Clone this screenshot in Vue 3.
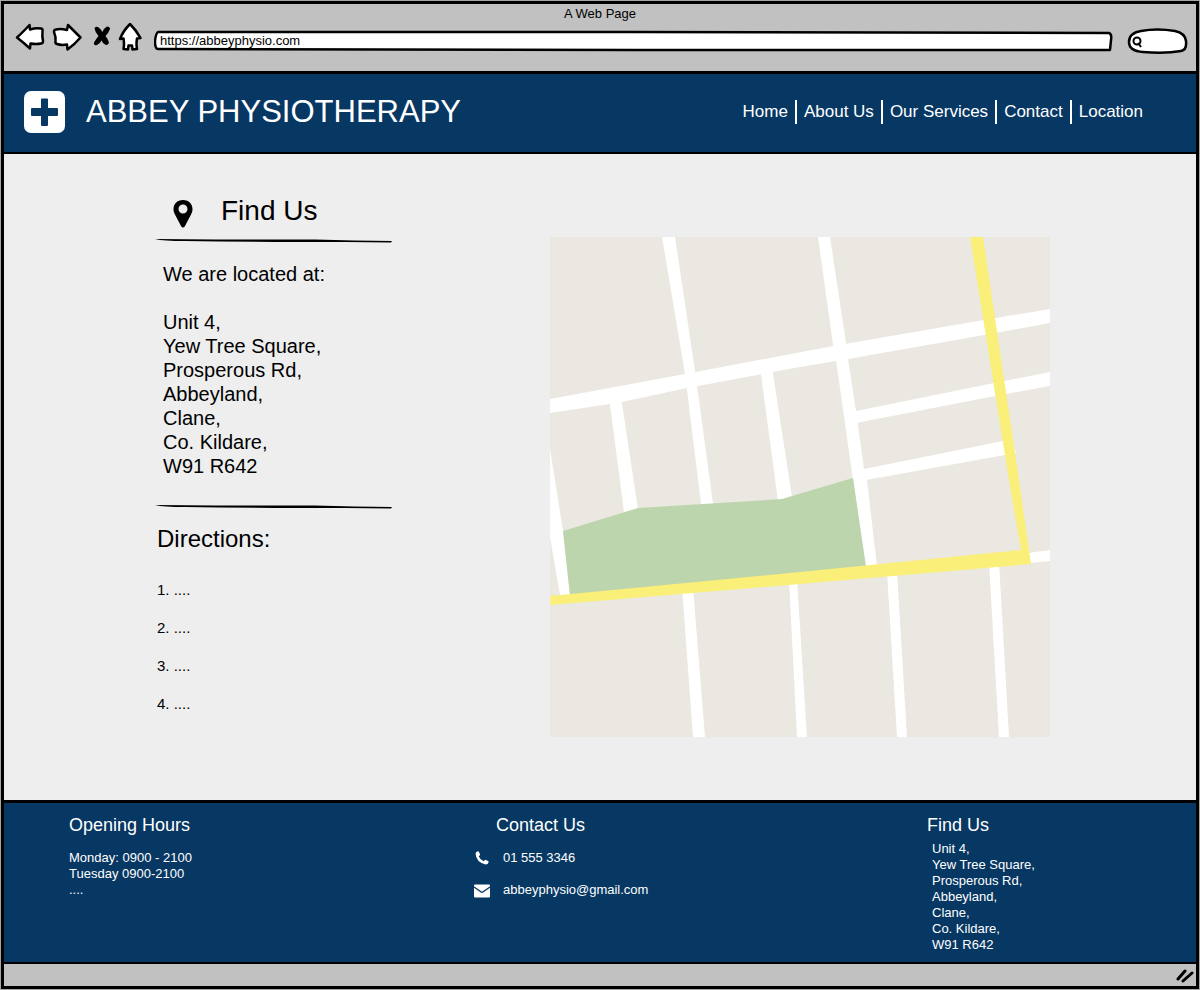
<script setup>
import { ref } from 'vue'

const address = ref('https://abbeyphysio.com')
const query = ref('')

const navItems = ['Home', 'About Us', 'Our Services', 'Contact', 'Location']
const addressLines = [
  'Unit 4,',
  'Yew Tree Square,',
  'Prosperous Rd,',
  'Abbeyland,',
  'Clane,',
  'Co. Kildare,',
  'W91 R642'
]
const directions = ['1. ....', '2. ....', '3. ....', '4. ....']
const hours = ['Monday: 0900 - 2100', 'Tuesday 0900-2100', '....']

const roads = [
  '0,162 135,137 283,109 434,83 500,72 500,86 434,98 298,122 250,130 137,151 72,165 60,167 0,176',
  '112,0 125,0 145,134 147,148 163,267 151,267 137,153 135,137',
  '59,160 71,160 88,272 74,275',
  '210,130 222,130 242,260 228,264',
  '0,212 5,243 13,294 20,357 20,362 11,362 10,358 0,300',
  '268,0 280,0 296,106 298,122 306,174 314,232 317,243 327,330 316,330 303,243 286,123 283,108',
  '306,174 444,146 500,135 500,149 445,159 306,186',
  '314,232 453,204 461,202 466,216 455,218 316,243',
  '478,316 500,313 500,324 480,326',
  '132,350 143,350 155,500 143,500',
  '239,342 247,342 257,500 247,500',
  '337,335 347,335 357,500 347,500',
  '439,325 449,325 459,500 449,500'
]
</script>

<template>
  <div class="page">
    <div class="window">
      <div class="toolbar">
        <div class="window-title">A Web Page</div>
        <div class="controls">
          <button type="button" class="tool" aria-label="Back">
            <svg width="36" height="36" viewBox="12 23 36 36">
              <path class="outline" d="M17 37.500Q22 33 29.500 25L30 29.500Q36 27.500 41 28.500Q43 29 42.500 31Q42 37 43 41Q43 43.500 41 43.500Q36 44.500 30.500 43.500L30 48.500Q24 43 17 37.500Z" />
            </svg>
          </button>
          <button type="button" class="tool" aria-label="Forward">
            <svg width="36" height="36" viewBox="48 23 36 36">
              <path class="outline" d="M54 32Q54 29.500 56 29.500Q61 28.500 67 30L68 25Q74 31 80.500 37.500Q75 44 67.500 49.500L67 44.500Q61 45.500 57 44Q55 43.500 55.500 41Q56 37 54 32Z" />
            </svg>
          </button>
          <button type="button" class="tool" aria-label="Stop">
            <svg width="32" height="36" viewBox="84 23 32 36">
              <path d="M94.500 28.500Q95 26 98 27Q101 29 102.500 32Q104 28 107 26.500Q110 26.500 110 29Q108.500 33 105.500 36Q108 39 109 42.500Q108 46 105 44.500Q102.500 43 101.500 40.500Q100 43.500 97 45Q93.500 46 94 42.500Q96 39 98.500 36Q95 32 94.500 28.500Z" />
            </svg>
          </button>
          <button type="button" class="tool" aria-label="Home">
            <svg width="30" height="36" viewBox="116 23 30 36">
              <path class="outline" d="M130 24Q136 30 140.500 38L137 38.500Q136 44 137 49L132.500 49.500L132 45.500L128.500 45.500L128 49.500L123.500 49Q124.500 44 123.500 38.500L120 39Q123 31 130 24Z" />
            </svg>
          </button>
          <div class="url-box">
            <svg class="sketch" viewBox="0 0 960 22" preserveAspectRatio="none" aria-hidden="true">
              <path class="outline" vector-effect="non-scaling-stroke" d="M4 2 Q300 1 480 2 Q800 3 956 3 Q959 4 958 10 L957 20 Q700 21 480 20 Q200 19 4 19 Q1 19 1 11 Q2 3 4 2Z" />
            </svg>
            <input v-model="address" type="text" aria-label="Address">
          </div>
          <div class="search-box">
            <svg class="sketch" viewBox="0 0 62 28" preserveAspectRatio="none" aria-hidden="true">
              <path class="outline" d="M14 4 Q30 1 48 4 Q58 6 59 14 Q60 23 54 24 Q38 27 16 25 Q2 24 2 15 Q2 6 14 4Z" />
              <circle class="lens" cx="10" cy="14" r="3.500" />
              <path class="lens" d="M11 16 L14 20" />
            </svg>
            <input v-model="query" type="text" aria-label="Search">
          </div>
        </div>
      </div>

      <header class="site-header">
        <svg class="logo" width="42" height="42" viewBox="0 0 42 42" aria-hidden="true">
          <rect width="41" height="42" rx="7" fill="#fff" />
          <path d="M18 7.500h5q1 0 1 1V17h9q1 0 1 1v6q0 1-1 1h-9v9q0 1-1 1h-5q-1 0-1-1v-9H8q-1 0-1-1v-6q0-1 1-1h9V8.500q0-1 1-1Z" fill="#073763" />
        </svg>
        <h1>ABBEY PHYSIOTHERAPY</h1>
        <nav>
          <a v-for="item in navItems" :key="item" href="#">{{ item }}</a>
        </nav>
      </header>

      <main>
        <section class="info">
          <div class="find-heading">
            <svg width="20" height="28" viewBox="0 0 20 28" aria-hidden="true">
              <path fill-rule="evenodd" d="M10 0C4 0 .5 4 .5 9c0 2 .5 3.500 1.200 5L8 26q2 3 4 0l6.300-12c.7-1.500 1.200-3 1.200-5C19.500 4 16 0 10 0Zm0 4.500a4.500 4.500 0 1 1 0 9a4.500 4.500 0 0 1 0-9Z" />
            </svg>
            <h2>Find Us</h2>
          </div>
          <svg class="rule" viewBox="0 0 237 4" preserveAspectRatio="none" aria-hidden="true">
            <path d="M0 0 L60 0.500 L160 0.500 Q200 1.500 237 2 L236 3.500 L190 3 Q100 3 30 2 Q8 2 0 0Z" />
          </svg>
          <p class="intro">We are located at:</p>
          <address>
            <div v-for="line in addressLines" :key="line">{{ line }}</div>
          </address>
          <svg class="rule" viewBox="0 0 237 4" preserveAspectRatio="none" aria-hidden="true">
            <path d="M0 0 L60 0.500 L160 0.500 Q200 1.500 237 2 L236 3.500 L190 3 Q100 3 30 2 Q8 2 0 0Z" />
          </svg>
          <h3>Directions:</h3>
          <ol>
            <li v-for="step in directions" :key="step">{{ step }}</li>
          </ol>
        </section>
        <svg class="map" viewBox="0 0 500 500" role="img" aria-label="Map">
          <rect width="500" height="500" fill="#ebe8e1" />
          <polygon v-for="road in roads" :key="road" :points="road" fill="#fff" />
          <polygon points="13,294 88,271 232,262 303,241 316,330 20,359" fill="#bdd5ac" />
          <polygon points="420,0 433,0 469,243 481,327 250,347 0,368 0,359 250,335 471,313 459,243" fill="#faef78" />
        </svg>
      </main>

      <footer>
        <section>
          <h4>Opening Hours</h4>
          <div class="hours">
            <div v-for="line in hours" :key="line">{{ line }}</div>
          </div>
        </section>
        <section>
          <h4 class="contact-title">Contact Us</h4>
          <div class="contact-row">
            <svg width="16" height="16" viewBox="0 0 16 16" aria-hidden="true">
              <path fill="#fff" d="M1.500 3.500Q2 1.500 4 1.200L4.700 1.500L6.200 4.500Q6 5.500 4.700 6.200Q6 9.500 9.700 11.200Q10.500 9.700 11.500 9.700L14.500 11.200V12.500Q14 14.500 11.500 14.500Q2 12 1.500 3.500Z" />
            </svg>
            <span>01 555 3346</span>
          </div>
          <div class="contact-row">
            <svg width="16" height="16" viewBox="0 0 16 16" aria-hidden="true">
              <path fill="#fff" d="M1 2.500h14q1 0 1 1v.7L8 9.700L0 4.200V3.500q0-1 1-1ZM0 5.700L6.800 10.500q1.200.8 2.400 0L16 5.700V14.500q0 1-1 1H1q-1 0-1-1Z" />
            </svg>
            <span>abbeyphysio@gmail.com</span>
          </div>
        </section>
        <section>
          <h4>Find Us</h4>
          <address>
            <div v-for="line in addressLines" :key="line">{{ line }}</div>
          </address>
        </section>
      </footer>

      <div class="status">
        <svg width="18" height="16" viewBox="0 0 18 16" aria-hidden="true">
          <path d="M2 12L9 4M7 14L16 6" fill="none" stroke="#000" stroke-width="3" stroke-linecap="round" />
        </svg>
      </div>
    </div>
  </div>
</template>

<style>
body {
  margin: 0;
  background: #a6a6a6;
}
</style>

<style scoped>
.page {
  box-sizing: border-box;
  min-height: 100vh;
  padding: 1px;
  display: flex;
  font-family: "Liberation Sans", Arial, sans-serif;
  color: #000;
}
.window {
  flex: 1;
  display: flex;
  flex-direction: column;
  border: 3px solid #000;
  background: #eee;
}
h1, h2, h3, h4, p, ol {
  margin: 0;
  padding: 0;
  font-weight: 400;
}
address {
  font-style: normal;
}
svg {
  display: block;
  flex: none;
}
.outline {
  fill: #fff;
  stroke: #000;
  stroke-width: 2.5;
  stroke-linejoin: round;
}

.toolbar {
  background: #c1c1c1;
  border-bottom: 3px solid #000;
  padding-bottom: 12px;
}
.window-title {
  text-align: center;
  font-size: 13px;
  line-height: 19px;
}
.controls {
  display: flex;
  align-items: center;
  padding: 0 7px 0 8px;
}
.tool {
  border: 0;
  padding: 0;
  background: none;
}
.url-box {
  position: relative;
  flex: 1;
  height: 22px;
  margin: 0 14px 0 8px;
}
.search-box {
  position: relative;
  width: 62px;
  height: 28px;
}
.sketch {
  position: absolute;
  inset: 0;
  width: 100%;
  height: 100%;
}
.lens {
  fill: none;
  stroke: #000;
  stroke-width: 2;
}
input {
  position: relative;
  box-sizing: border-box;
  display: block;
  width: 100%;
  height: 100%;
  border: 0;
  outline: 0;
  padding: 0 6px 2px;
  background: none;
  font: 13px "Liberation Sans", Arial, sans-serif;
  color: #000;
}
.search-box input {
  padding: 0 8px 0 20px;
}

.site-header {
  box-sizing: border-box;
  display: flex;
  align-items: center;
  min-height: 80px;
  padding: 0 53px 2px 20px;
  background: #073763;
  border-bottom: 2px solid #000;
  color: #fff;
}
h1 {
  margin-left: 20px;
  font-size: 31px;
  line-height: 36px;
  white-space: nowrap;
}
nav {
  display: flex;
  margin-left: auto;
}
nav a {
  color: #fff;
  text-decoration: none;
  font-size: 17px;
  line-height: 24px;
  white-space: nowrap;
}
nav a + a {
  margin-left: 7px;
  padding-left: 7px;
  border-left: 2px solid #fff;
}

main {
  flex: 1;
  display: grid;
  grid-template-columns: 237px minmax(0, 500px);
  justify-content: space-between;
  align-items: start;
  padding: 40px 146px 60px 151px;
}
.find-heading {
  display: flex;
  align-items: center;
  gap: 28px;
  height: 34px;
  padding-left: 18px;
}
.find-heading svg {
  margin-top: 6px;
}
h2 {
  font-size: 28px;
  line-height: 34px;
}
.rule {
  width: 100%;
  height: 4px;
}
.find-heading + .rule {
  margin-top: 11px;
}
.intro {
  margin: 19px 0 24px;
  padding-left: 8px;
  font-size: 20px;
  line-height: 24px;
}
.info address {
  padding-left: 8px;
  margin-bottom: 27px;
  font-size: 20px;
  line-height: 24px;
}
h3 {
  margin: 14px 0 16px;
  padding-left: 2px;
  font-size: 24px;
  line-height: 32px;
}
ol {
  list-style: none;
  padding-left: 2px;
  font-size: 15px;
  line-height: 38px;
}
.map {
  width: 100%;
  height: auto;
  margin-top: 43px;
}

footer {
  display: grid;
  grid-template-columns: 405fr 453fr 269fr;
  padding: 10px 0 9px 65px;
  background: #073763;
  border-top: 3px solid #000;
  border-bottom: 2px solid #000;
  color: #fff;
  font-size: 13px;
  line-height: 16px;
}
h4 {
  font-size: 18px;
  line-height: 24px;
}
.hours {
  margin-top: 13px;
}
.contact-title {
  padding-left: 22px;
  margin-bottom: 13px;
}
.contact-row {
  display: flex;
  gap: 13px;
  margin-bottom: 16px;
}
footer address {
  margin-top: 4px;
  padding-left: 5px;
}

.status {
  display: flex;
  align-items: center;
  justify-content: flex-end;
  height: 22px;
  padding-right: 2px;
  background: #c1c1c1;
}
</style>
